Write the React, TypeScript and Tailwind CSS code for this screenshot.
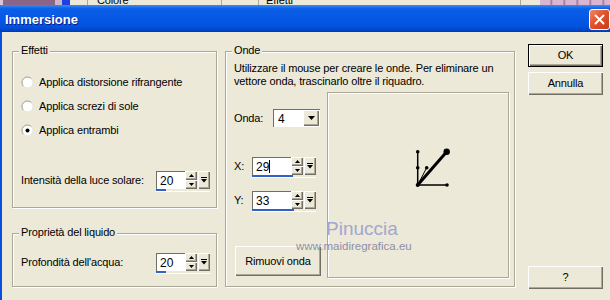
import React from "react";

const RAISED =
  "bg-[#ece9d8] shadow-[inset_1px_1px_0_#fff,inset_-1px_-1px_0_#716f64,inset_-2px_-2px_0_#aca899]";
const ETCHED = "border border-[#aca899] shadow-[inset_1px_1px_0_#fff,1px_1px_0_#fff]";

function Radio({ checked }: { checked?: boolean }) {
  return (
    <svg width="13" height="13" viewBox="0 0 13 13" className="shrink-0">
      <circle cx="6.5" cy="6.5" r="5.5" fill="#fff" />
      <path d="M2.6 10.4 A5.5 5.5 0 0 1 10.4 2.6" fill="none" stroke="#9d9a8c" strokeWidth="1" />
      <path d="M10.4 2.6 A5.5 5.5 0 0 1 2.6 10.4" fill="none" stroke="#e4e2d8" strokeWidth="1" />
      {checked && <circle cx="6.5" cy="6.5" r="2" fill="#000" />}
    </svg>
  );
}

function SpinBox({
  value,
  editW,
  barW,
  caret,
}: {
  value: string;
  editW: string;
  barW: string;
  caret?: boolean;
}) {
  return (
    <div className="flex flex-col w-max">
      <div className="flex h-[18px]">
        <div
          className={`${editW} h-full bg-white border-t border-l border-[#716f64] flex items-center pl-[3px] text-[12px] tracking-normal`}
        >
          {value}
          {caret && <span className="w-px h-[13px] bg-black" />}
        </div>
        <div className="flex flex-col w-[12px] h-full">
          <div className={`h-[9px] flex items-center justify-center ${RAISED}`}>
            <svg width="5" height="3" viewBox="0 0 5 3">
              <path d="M0 3 L2.5 0 L5 3 Z" fill="#000" />
            </svg>
          </div>
          <div className={`h-[9px] flex items-center justify-center ${RAISED}`}>
            <svg width="5" height="3" viewBox="0 0 5 3">
              <path d="M0 0 L2.5 3 L5 0 Z" fill="#000" />
            </svg>
          </div>
        </div>
        <div className={`w-[12px] ml-px h-full flex items-center justify-center ${RAISED}`}>
          <svg width="6" height="6" viewBox="0 0 6 6">
            <rect x="0" y="0" width="6" height="1" fill="#000" />
            <path d="M0 2 L3 5.5 L6 2 Z" fill="#000" />
          </svg>
        </div>
      </div>
      <div className="h-[3px] border-b border-white">
        <div className={`${barW} h-[2px] bg-[#2f62c6]`} />
      </div>
    </div>
  );
}

function Button({ children, cls, def }: { children: React.ReactNode; cls: string; def?: boolean }) {
  return (
    <div
      className={`${cls} flex items-center justify-center ${RAISED} ${def ? "border border-black" : ""}`}
    >
      {children}
    </div>
  );
}

export default function App() {
  return (
    <div className="relative w-[610px] h-[300px] overflow-hidden bg-[#ece9d8] flex flex-col font-['Liberation_Sans',Arial,sans-serif] text-[11px] tracking-[-0.15px] text-black">
      {/* background windows strip */}
      <div className="h-[5px] flex overflow-hidden shrink-0">
        <div className="w-[3px] bg-[#dcc3d6]" />
        <div className="w-[52px] bg-[#8a6585]" />
        <div className="w-[7px] bg-[#cdb6c8]" />
        <div className="w-[8px] bg-[#1f3fe0]" />
        <div className="w-[470px] bg-[#ece9d8] flex">
          <div className="ml-[17px] w-[135px] border-l border-r border-[#aca899] pl-[9px] overflow-hidden">
            <div className="-mt-[6px] leading-[13px]">Colore</div>
          </div>
          <div className="ml-[36px] w-[263px] border-l border-r border-[#aca899] pl-[7px] overflow-hidden">
            <div className="-mt-[6px] leading-[13px]">Effetti</div>
          </div>
        </div>
        <div className="flex-1 bg-[repeating-linear-gradient(90deg,#d8b6d2_0px,#d8b6d2_10px,#9c7096_11px,#d8b6d2_13px)]" />
      </div>

      {/* title bar */}
      <div className="h-[27px] shrink-0 flex items-start bg-[linear-gradient(180deg,#3a8bf5_0%,#0a5fe8_14%,#0558e4_50%,#0352de_80%,#0046cc_93%,#0038b0_100%)]">
        <div className="pl-[5px] pt-[7px] text-white font-bold text-[13px] leading-[15px] tracking-normal [text-shadow:1px_1px_0_#0a1e8c]">
          Immersione
        </div>
        <div className="ml-auto mt-[4px] w-[21px] h-[21px] rounded-[3px] border border-white bg-[linear-gradient(135deg,#f08a68_0%,#e0532d_45%,#c43c16_100%)] flex items-center justify-center">
          <svg width="11" height="11" viewBox="0 0 11 11">
            <path d="M1.5 1.5 L9.5 9.5 M9.5 1.5 L1.5 9.5" stroke="#fff" strokeWidth="2" strokeLinecap="round" />
          </svg>
        </div>
      </div>

      {/* body */}
      <div className="flex flex-1 min-h-0">
        <div className="w-[2px] bg-[#0a4de0] shrink-0" />
        <div className="flex pt-[12px] pl-[10px]">
          {/* left column */}
          <div className="w-[205px] mt-[7px] flex flex-col">
            <div className={`relative ${ETCHED} pt-[18px] pb-[15px] pl-[8px]`}>
              <span className="absolute left-[6px] -top-[8px] px-[2px] leading-[13px] bg-[#ece9d8]">Effetti</span>
              <div className="h-[24px] flex items-center gap-[5px]">
                <Radio />
                <span>Applica distorsione rifrangente</span>
              </div>
              <div className="h-[24px] flex items-center gap-[5px]">
                <Radio />
                <span>Applica screzi di sole</span>
              </div>
              <div className="h-[24px] flex items-center gap-[5px]">
                <Radio checked />
                <span>Applica entrambi</span>
              </div>
              <div className="mt-[29px] flex items-start">
                <span className="w-[135px] h-[18px] leading-[18px]">Intensità della luce solare:</span>
                <SpinBox value="20" editW="w-[29px]" barW="w-[10px]" />
              </div>
            </div>
            <div className={`relative mt-[25px] ${ETCHED} pt-[19px] pb-[12px] pl-[8px]`}>
              <span className="absolute left-[6px] -top-[8px] px-[2px] leading-[13px] bg-[#ece9d8]">
                Proprietà del liquido
              </span>
              <div className="flex items-start">
                <span className="w-[135px] h-[18px] leading-[18px]">Profondità dell'acqua:</span>
                <SpinBox value="20" editW="w-[29px]" barW="w-[10px]" />
              </div>
            </div>
          </div>

          {/* Onde */}
          <div className={`relative ml-[8px] mt-[7px] w-[290px] h-[236px] ${ETCHED} pt-[10px] pl-[8px]`}>
            <span className="absolute left-[6px] -top-[8px] px-[2px] leading-[13px] bg-[#ece9d8]">Onde</span>
            <div className="leading-[13px] whitespace-nowrap">
              Utilizzare il mouse per creare le onde. Per eliminare un
              <br />
              vettore onda, trascinarlo oltre il riquadro.
            </div>
            <div className="mt-[4px] flex">
              <div className="w-[87px] flex flex-col">
                <div className="mt-[17px] flex items-center h-[18px]">
                  <span className="w-[39px]">Onda:</span>
                  <div className="w-[47px] h-[18px] flex bg-white border-t border-l border-[#716f64] shadow-[inset_-1px_-1px_0_#fff]">
                    <div className="flex-1 flex items-center pl-[4px] text-[12px]">4</div>
                    <div className={`w-[16px] h-[16px] mr-[1px] flex items-center justify-center ${RAISED}`}>
                      <svg width="7" height="4" viewBox="0 0 7 4">
                        <path d="M0 0 L3.5 4 L7 0 Z" fill="#000" />
                      </svg>
                    </div>
                  </div>
                </div>
                <div className="mt-[30px] flex items-start">
                  <span className="w-[18px] h-[18px] leading-[18px]">X:</span>
                  <SpinBox value="29" editW="w-[39px]" barW="w-[41px]" caret />
                </div>
                <div className="mt-[13px] flex items-start">
                  <span className="w-[18px] h-[18px] leading-[18px]">Y:</span>
                  <SpinBox value="33" editW="w-[39px]" barW="w-[42px]" />
                </div>
                <Button cls="mt-[34px] ml-px w-[86px] h-[30px]">Rimuovi onda</Button>
              </div>
              <div className={`ml-[6px] w-[182px] h-[186px] ${ETCHED}`}>
                <svg width="180" height="184" viewBox="0 0 180 184">
                  <line x1="89.7" y1="92" x2="89.7" y2="58.7" stroke="#000" strokeWidth="1.5" />
                  <line x1="89.7" y1="92" x2="119" y2="92" stroke="#000" strokeWidth="1.5" />
                  <line x1="89.7" y1="92" x2="98.7" y2="74.7" stroke="#000" strokeWidth="1" />
                  <line x1="89.7" y1="92" x2="118.7" y2="58.7" stroke="#000" strokeWidth="3" />
                  <circle cx="89.7" cy="92" r="2" fill="#000" />
                  <circle cx="89.7" cy="58.7" r="1.8" fill="#000" />
                  <circle cx="89.7" cy="74.7" r="1.8" fill="#000" />
                  <circle cx="119" cy="92" r="1.8" fill="#000" />
                  <circle cx="98.7" cy="74.7" r="1.8" fill="#000" />
                  <circle cx="118.7" cy="58.7" r="3.2" fill="#000" />
                </svg>
              </div>
            </div>
          </div>

          {/* right buttons */}
          <div className="ml-[13px] w-[75px] flex flex-col">
            <Button cls="h-[23px]" def>
              OK
            </Button>
            <Button cls="mt-[5px] h-[23px]">Annulla</Button>
            <Button cls="mt-[171px] h-[23px]">?</Button>
          </div>
        </div>
      </div>

      {/* watermark */}
      <span className="absolute left-[326px] top-[218px] text-[19px] leading-[22px] tracking-normal text-[#a3a6d0]">
        Pinuccia
      </span>
      <span className="absolute left-[296px] top-[240px] text-[11.5px] leading-[13px] tracking-normal text-[#8f8fa8]">
        www.maidiregrafica.eu
      </span>
    </div>
  );
}
